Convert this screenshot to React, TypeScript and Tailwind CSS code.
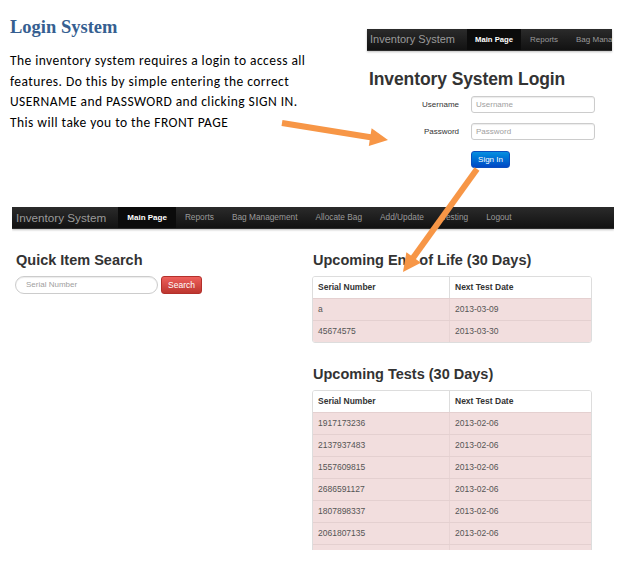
import React from 'react'

const ORANGE = '#f79646'

const mainNav = ['Main Page', 'Reports', 'Bag Management', 'Allocate Bag', 'Add/Update', 'Testing', 'Logout']

interface NavBarProps {
  items: string[]
  brandClass: string
  activeClass: string
  linkClass: string
}

function NavBar({ items, brandClass, activeClass, linkClass }: NavBarProps) {
  return (
    <div className="flex h-[22px] shrink-0 items-stretch overflow-hidden whitespace-nowrap border-b border-[#2c2c2c] bg-gradient-to-b from-[#2b2b2b] to-[#121212] shadow-[0_1px_2px_rgba(0,0,0,0.25)]">
      <span className={brandClass}>Inventory System</span>
      {items.map((item, i) => (
        <span key={item} className={i === 0 ? activeClass : linkClass}>
          {item}
        </span>
      ))}
    </div>
  )
}

function DataTable({ rows }: { rows: [string, string][] }) {
  return (
    <div className="overflow-hidden rounded-[3px] border border-[#dddddd] text-[8.5px]">
      <div className="flex h-[21px] items-center bg-white font-bold text-[#333]">
        <div className="flex h-full w-[137px] items-center border-r border-[#dddddd] pl-[5px]">Serial Number</div>
        <div className="pl-[5px]">Next Test Date</div>
      </div>
      {rows.map(([serial, date], i) => (
        <div key={i} className="flex h-[22px] items-center border-t border-[#e4d0d0] bg-[#f2dede] text-[#555]">
          <div className="flex h-full w-[137px] items-center border-r border-[#e8d4d4] pl-[5px]">{serial}</div>
          <div className="pl-[5px]">{date}</div>
        </div>
      ))}
    </div>
  )
}

function LoginShot() {
  return (
    <div className="mt-[29px] w-[245px] font-['Liberation_Sans',Arial,sans-serif]">
      <NavBar
        items={['Main Page', 'Reports', 'Bag Management']}
        brandClass="flex items-center pl-[3px] pr-[12px] text-[11px] text-[#9a9a9a]"
        activeClass="flex items-center bg-[#0b0b0b] px-[8px] text-[7.7px] font-bold text-white"
        linkClass="flex items-center px-[9px] text-[8px] text-[#9a9a9a]"
      />
      <h2 className="ml-[2px] mt-[17px] text-[17.5px] font-bold leading-[22px] text-[#333] tracking-[-0.1px]">
        Inventory System Login
      </h2>
      <div className="mt-[6px] grid grid-cols-[92px_124px] items-center gap-x-[12px] gap-y-[10px] text-[8px]">
        <span className="text-right text-[#333]">Username</span>
        <div className="flex h-[17px] items-center rounded-[3px] border border-[#cccccc] bg-white pl-[4px] text-[#a0a0a0] shadow-[inset_0_1px_1px_rgba(0,0,0,0.08)]">
          Username
        </div>
        <span className="text-right text-[#333]">Password</span>
        <div className="flex h-[17px] items-center rounded-[3px] border border-[#cccccc] bg-white pl-[4px] text-[#a0a0a0] shadow-[inset_0_1px_1px_rgba(0,0,0,0.08)]">
          Password
        </div>
        <span />
        <div className="mt-[1px] flex h-[17px] w-[39px] items-center justify-center rounded-[3px] border border-[#0a4fbf] bg-gradient-to-b from-[#0a8fe0] to-[#0447c4] text-white">
          Sign In
        </div>
      </div>
    </div>
  )
}

function FrontPageShot() {
  return (
    <div className="ml-[12px] mt-[39px] flex h-[343px] w-[602px] flex-col overflow-hidden font-['Liberation_Sans',Arial,sans-serif]">
      <NavBar
        items={mainNav}
        brandClass="flex items-center pl-[4px] pr-[12px] text-[11.7px] text-[#9a9a9a]"
        activeClass="flex items-center bg-[#0b0b0b] px-[9px] text-[8px] font-bold text-white"
        linkClass="flex items-center px-[9px] text-[8.3px] text-[#9a9a9a]"
      />
      <div className="flex">
        <div className="ml-[3px] w-[297px]">
          <h3 className="pl-[1px] pt-[22px] text-[14.5px] font-bold leading-[18px] text-[#333]">Quick Item Search</h3>
          <div className="mt-[7px] flex items-center">
            <div className="flex h-[18px] w-[143px] items-center rounded-full border border-[#cccccc] bg-white pl-[10px] text-[8px] text-[#a0a0a0] shadow-[inset_0_1px_1px_rgba(0,0,0,0.08)]">
              Serial Number
            </div>
            <div className="ml-[3px] flex h-[18px] w-[41px] items-center justify-center rounded-[3px] border border-[#b3302b] bg-gradient-to-b from-[#ee5f5b] to-[#bd362f] text-[8.5px] text-white">
              Search
            </div>
          </div>
        </div>
        <div className="w-[280px]">
          <h3 className="pl-[1px] pt-[22px] text-[14.5px] font-bold leading-[18px] text-[#333]">
            Upcoming End of Life (30 Days)
          </h3>
          <div className="mt-[7px]">
            <DataTable rows={[['a', '2013-03-09'], ['45674575', '2013-03-30']]} />
          </div>
          <h3 className="mt-[22px] pl-[1px] text-[14.5px] font-bold leading-[18px] text-[#333]">Upcoming Tests (30 Days)</h3>
          <div className="mt-[7px]">
            <DataTable
              rows={[
                ['1917173236', '2013-02-06'],
                ['2137937483', '2013-02-06'],
                ['1557609815', '2013-02-06'],
                ['2686591127', '2013-02-06'],
                ['1807898337', '2013-02-06'],
                ['2061807135', '2013-02-06'],
                ['', ''],
              ]}
            />
          </div>
        </div>
      </div>
    </div>
  )
}

function Arrows() {
  return (
    <svg className="pointer-events-none absolute inset-0" width={624} height={567} viewBox="0 0 624 567">
      <line x1={282} y1={123} x2={372} y2={137.5} stroke={ORANGE} strokeWidth={6} />
      <polygon points="388,140 368.8,146.1 371.6,128.3" fill={ORANGE} />
      <line x1={477} y1={169} x2={413} y2={258} stroke={ORANGE} strokeWidth={6} />
      <polygon points="403,272 420.9,262.8 406.4,252.2" fill={ORANGE} />
    </svg>
  )
}

export default function App() {
  return (
    <div className="relative h-[567px] w-[624px] overflow-hidden bg-white">
      <div className="flex items-start">
        <div className="w-[367px] shrink-0 pl-[10px] pt-[15px]">
          <h1 className="font-['Liberation_Serif',serif] text-[18.5px] font-bold leading-[24px] text-[#365f91]">
            Login System
          </h1>
          <p className="mt-[12px] whitespace-nowrap font-['Carlito','Lato',sans-serif] text-[13.5px] leading-[20.7px] tracking-[0.45px] text-black">
            The inventory system requires a login to access all
            <br />
            features. Do this by simple entering the correct
            <br />
            USERNAME and PASSWORD and clicking SIGN IN.
            <br />
            This will take you to the FRONT PAGE
          </p>
        </div>
        <LoginShot />
      </div>
      <FrontPageShot />
      <Arrows />
    </div>
  )
}
